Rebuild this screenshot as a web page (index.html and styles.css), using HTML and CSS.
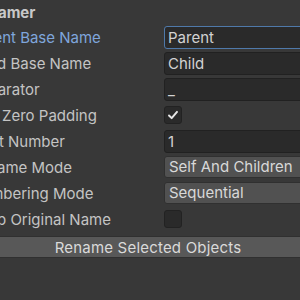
FILE: index.html
```html
<!DOCTYPE html>
<html lang="en">
<head>
    <meta charset="UTF-8">
    <meta name="viewport" content="width=device-width, initial-scale=1.0">
    <title>Renamer</title>
    <link rel="stylesheet" href="styles.css">
</head>
<body>
    <div class="inspector">
        <div class="header">Renamer</div>

        <div class="fields">
            <label class="label focused">Parent Base Name</label>
            <div class="text-field active">Parent</div>

            <label class="label">Child Base Name</label>
            <div class="text-field">Child</div>

            <label class="label">Separator</label>
            <div class="text-field">_</div>

            <label class="label">Use Zero Padding</label>
            <div class="toggle checked">
                <svg viewBox="0 0 18 18" width="18" height="18">
                    <path d="M4.5 9.5 L7.5 12.5 L13.5 5.5" fill="none" stroke="#e6e6e6" stroke-width="2.2" stroke-linecap="round" stroke-linejoin="round"/>
                </svg>
            </div>

            <label class="label">Start Number</label>
            <div class="text-field">1</div>

            <label class="label">Rename Mode</label>
            <div class="dropdown">Self And Children</div>

            <label class="label">Numbering Mode</label>
            <div class="dropdown">Sequential</div>

            <label class="label">Keep Original Name</label>
            <div class="toggle"></div>
        </div>
    </div>

    <button class="action-btn">Rename Selected Objects</button>
</body>
</html>
```

FILE: styles.css
```css
* {
    margin: 0;
    padding: 0;
    box-sizing: border-box;
}

body {
    font-family: 'Inter', 'Noto Sans', sans-serif;
    font-size: 15px;
    background: #383838;
    color: #c4c4c4;
    width: 300px;
    height: 300px;
    overflow: hidden;
}

/* the panel is wider than the window, the left and right get cut off */
.inspector {
    width: 380px;
    margin-left: -30px;
}

.header {
    height: 24px;
    line-height: 26px;
    font-weight: bold;
    color: #c8c8c8;
}

.fields {
    display: grid;
    grid-template-columns: 194px 1fr;
    grid-auto-rows: 26px;
    align-items: center;
}

.label {
    white-space: nowrap;
}

.label.focused {
    color: #7fa6dc;
}

.text-field {
    height: 23px;
    line-height: 21px;
    padding-left: 3px;
    background: #2a2a2a;
    border: 1px solid #212121;
    border-radius: 3px;
    color: #d2d2d2;
}

.text-field.active {
    border-color: #4f79aa;
}

.dropdown {
    height: 22px;
    line-height: 20px;
    padding-left: 4px;
    background: #515151;
    border: 1px solid #303030;
    border-radius: 3px;
    color: #d8d8d8;
}

.toggle {
    width: 18px;
    height: 18px;
    background: #2a2a2a;
    border: 1px solid #222222;
    border-radius: 3px;
    display: flex;
    align-items: center;
    justify-content: center;
}

.toggle svg {
    display: block;
}

.action-btn {
    display: block;
    width: 310px;
    height: 22px;
    margin: 4px 0 0 -7px;
    background: #585858;
    border: 1px solid #303030;
    border-radius: 3px;
    font-family: 'Inter', 'Noto Sans', sans-serif;
    font-size: 15px;
    letter-spacing: 0.2px;
    color: #dadada;
    text-align: center;
}
```
